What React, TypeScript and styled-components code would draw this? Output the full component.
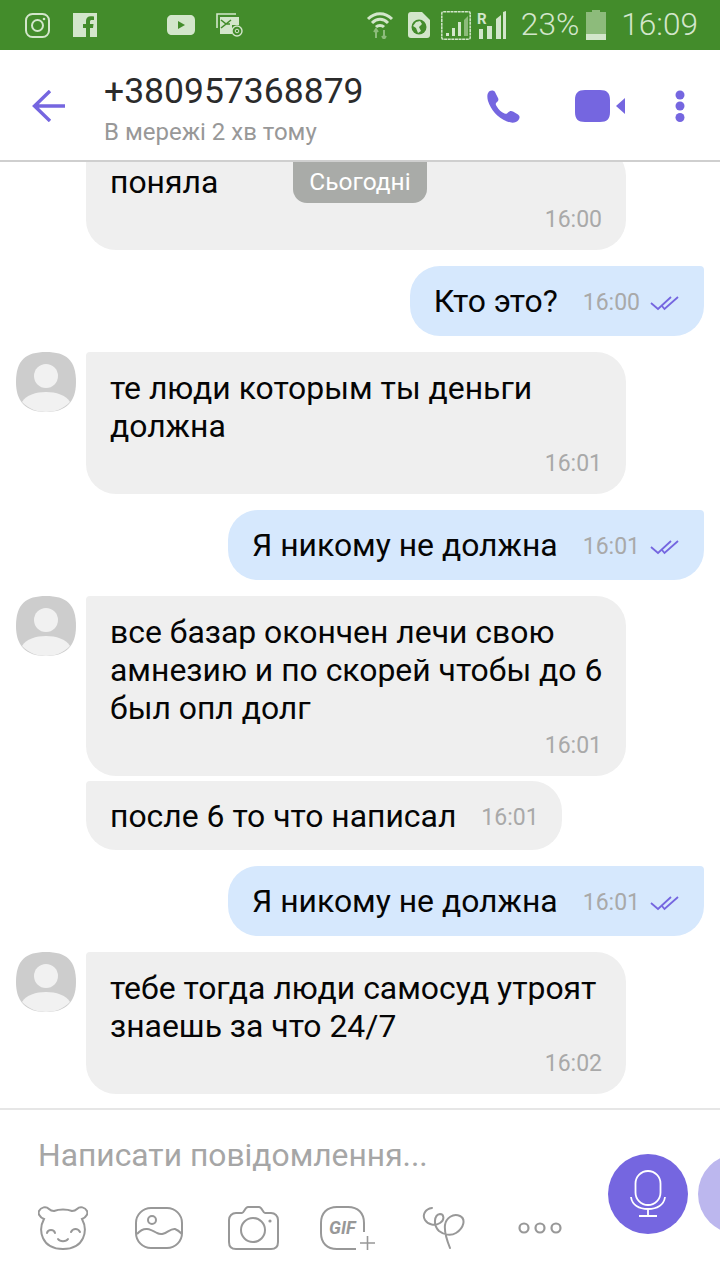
import React from 'react'
import styled, { createGlobalStyle } from 'styled-components'

const colors = {
  statusBar: '#438c2b',
  statusIcon: '#d3e6cb',
  violet: '#7566e0',
  incoming: '#efefef',
  outgoing: '#d6e8fd',
  time: '#a9a9a9',
  grey: '#989898',
}

const GlobalStyle = createGlobalStyle`
  html, body {
    margin: 0;
    padding: 0;
    background: #fff;
  }
  * {
    box-sizing: border-box;
  }
`

const Screen = styled.div`
  width: 720px;
  height: 1280px;
  display: flex;
  flex-direction: column;
  overflow: hidden;
  font-family: Roboto, 'Noto Sans', sans-serif;
  background: #fff;
`

const StatusBar = styled.div`
  height: 50px;
  flex-shrink: 0;
  display: flex;
  align-items: center;
  padding: 0 22px 0 25px;
  background: ${colors.statusBar};
  color: ${colors.statusIcon};
`

const StatusIcon = styled.svg<{ $gap?: number }>`
  display: block;
  flex-shrink: 0;
  margin-left: ${(p) => p.$gap || 0}px;
`

const StatusSpacer = styled.div`
  flex: 1;
`

const StatusText = styled.span<{ $gap: number }>`
  margin-left: ${(p) => p.$gap}px;
  font-size: 31.6px;
  font-weight: 300;
  line-height: 50px;
  white-space: nowrap;
`

const Header = styled.header`
  height: 112px;
  flex-shrink: 0;
  display: flex;
  align-items: center;
  padding: 2px 35px 0 32px;
  border-bottom: 2px solid #cfcfcf;
`

const Peer = styled.div`
  margin-left: 38px;
  flex: 1;
  padding-top: 10px;
`

const PeerName = styled.div`
  font-size: 35.5px;
  line-height: 42px;
  color: #2b2b2b;
`

const PeerState = styled.div`
  font-size: 24px;
  line-height: 40px;
  color: ${colors.grey};
`

const HeaderIcon = styled.svg<{ $gap: number }>`
  display: block;
  flex-shrink: 0;
  margin-left: ${(p) => p.$gap}px;
`

const Chat = styled.main`
  position: relative;
  flex: 1;
  min-height: 0;
  display: flex;
  flex-direction: column;
  justify-content: flex-end;
  padding: 0 16px 14px;
  overflow: hidden;
`

const DayBadge = styled.div`
  position: absolute;
  top: 0;
  left: 293px;
  width: 134px;
  height: 41px;
  padding-top: 2px;
  border-radius: 0 0 14px 14px;
  background: #a9aba8;
  color: #fff;
  font-size: 24.5px;
  line-height: 36px;
  text-align: center;
`

const Row = styled.div<{ $out?: boolean; $tight?: boolean }>`
  flex-shrink: 0;
  display: flex;
  justify-content: ${(p) => (p.$out ? 'flex-end' : 'flex-start')};
  margin-top: ${(p) => (p.$tight ? 5 : 16)}px;
`

const Avatar = styled.svg`
  display: block;
  flex-shrink: 0;
  width: 60px;
  height: 60px;
`

const AvatarGap = styled.div`
  width: 60px;
  flex-shrink: 0;
`

const Bubble = styled.div<{ $out?: boolean; $wide?: boolean }>`
  margin-left: ${(p) => (p.$out ? 0 : 10)}px;
  width: ${(p) => (p.$wide ? '540px' : 'auto')};
  background: ${(p) => (p.$out ? colors.outgoing : colors.incoming)};
  border-radius: ${(p) => (p.$out ? '30px 4px 30px 30px' : '4px 30px 30px 30px')};
  color: #050505;
  font-size: 31.9px;
`

const Block = styled.div`
  padding: 17px 24px 14px;
  line-height: 38px;
  white-space: nowrap;
`

const Inline = styled.div<{ $compact?: boolean }>`
  height: ${(p) => (p.$compact ? 69 : 70)}px;
  display: flex;
  align-items: center;
  padding: 0 ${(p) => (p.$compact ? 23 : 24)}px 0 24px;
  line-height: 38px;
  white-space: nowrap;
`

const BlockTime = styled.div`
  margin-top: 3px;
  font-size: 23px;
  line-height: 32px;
  color: ${colors.time};
  text-align: right;
`

const InlineTime = styled.div`
  margin: 4px 0 0 25px;
  font-size: 23px;
  line-height: 32px;
  color: ${colors.time};
`

const Check = styled.svg`
  display: block;
  margin: 4px 0 0 10px;
  width: 30px;
  height: 16px;
`

const Composer = styled.footer`
  height: 172px;
  flex-shrink: 0;
  display: flex;
  border-top: 2px solid #e6e6e6;
  padding-left: 38px;
`

const ComposerMain = styled.div`
  flex: 0 0 570px;
  min-width: 0;
`

const Placeholder = styled.div`
  margin-top: 25px;
  font-size: 31.8px;
  line-height: 40px;
  color: #a6a6a6;
  white-space: nowrap;
`

const Tools = styled.div`
  margin-top: 31px;
  display: flex;
  align-items: center;
  color: ${colors.grey};
`

const Tool = styled.svg<{ $gap?: number }>`
  display: block;
  flex-shrink: 0;
  margin-left: ${(p) => p.$gap || 0}px;
`

const Round = styled.div<{ $faded?: boolean }>`
  flex-shrink: 0;
  width: 80px;
  height: 80px;
  margin-top: 44px;
  margin-left: ${(p) => (p.$faded ? 10 : 0)}px;
  display: flex;
  align-items: center;
  justify-content: center;
  border-radius: 50%;
  background: ${(p) => (p.$faded ? '#bcb7ee' : colors.violet)};
`

const AvatarIcon = () => (
  <Avatar viewBox="0 0 60 60">
    <path
      d="M30 0C50 0 60 8 60 30C60 50 50 60 30 60C10 60 0 50 0 30C0 8 10 0 30 0Z"
      fill="#cdcdcd"
    />
    <circle cx="30" cy="24" r="12" fill="#f1f1f1" />
    <path d="M6 50C10 43 20 40 30 40C40 40 50 43 54 50C47 57 39 60 30 60C21 60 13 57 6 50Z" fill="#f1f1f1" />
  </Avatar>
)

const DoubleCheck = () => (
  <Check viewBox="0 0 30 16" fill="none" stroke={colors.violet} strokeWidth="1.8">
    <path d="M1 8L8 14L21 2" />
    <path d="M12 11L14.5 14L28 2" />
  </Check>
)

const BearIcon = () => (
  <Tool width="50" height="44" viewBox="0 0 50 44" fill="none" stroke="currentColor" strokeWidth="2">
    <path d="M6 13C1 11 0 7 1 5C3 1 8 0 11 3C13 5 14 5 16 5C21 3 29 3 34 5C36 5 37 5 39 3C42 0 47 1 49 5C50 7 49 11 44 13C50 24 47 43 25 43C3 43 0 24 6 13Z" />
    <path d="M9 27C10 23 16 23 17 27M33 26C35 22 40 22 42 26M20 33C22 36 28 36 30 33" strokeLinecap="round" />
  </Tool>
)

const GalleryIcon = () => (
  <Tool $gap={47} width="48" height="42" viewBox="0 0 48 42" fill="none" stroke="currentColor" strokeWidth="2">
    <rect x="1" y="1" width="46" height="40" rx="15" />
    <circle cx="17" cy="13" r="4" />
    <path d="M2 27C9 19 15 22 22 26C30 30 34 21 40 22C43 23 45 25 47 27" />
  </Tool>
)

const CameraIcon = () => (
  <Tool $gap={45} width="51" height="44" viewBox="0 0 51 44" fill="none" stroke="currentColor" strokeWidth="2">
    <path d="M8 7H14C16 7 17 1 20 1H31C34 1 35 7 37 7H43C47 7 50 10 50 14V36C50 41 47 43 43 43H8C4 43 1 41 1 36V14C1 10 4 7 8 7Z" />
    <circle cx="25" cy="24" r="12" />
    <circle cx="42" cy="15" r="1.6" fill="currentColor" stroke="none" />
  </Tool>
)

const GifIcon = () => (
  <Tool $gap={41} width="56" height="44" viewBox="0 0 56 44" fill="none" stroke="currentColor" strokeWidth="2">
    <path d="M36 43H17C7 43 1 37 1 27V17C1 7 7 1 17 1H28C38 1 44 7 44 17V26" />
    <path d="M40 37H55M47.5 30V44" strokeWidth="1.6" />
    <text x="9" y="28" fontFamily="Roboto, sans-serif" fontSize="18" fontWeight="700" fontStyle="italic" fill="currentColor" stroke="none">
      GIF
    </text>
  </Tool>
)

const DoodleIcon = () => (
  <Tool $gap={46} width="44" height="42" viewBox="0 0 44 42" fill="none" stroke="currentColor" strokeWidth="2">
    <path d="M10 1C3 2 0 8 3 13C6 18 13 19 18 16C23 13 22 7 18 7C12 8 11 18 17 24C22 28 29 29 34 26C42 21 44 12 38 9C31 6 24 11 23 18C22 26 26 36 28 41" strokeLinecap="round" />
  </Tool>
)

const MoreIcon = () => (
  <Tool $gap={52} width="44" height="12" viewBox="0 0 44 12" fill="none" stroke="currentColor" strokeWidth="2.2">
    <circle cx="6" cy="6" r="4.5" />
    <circle cx="22" cy="6" r="4.5" />
    <circle cx="38" cy="6" r="4.5" />
  </Tool>
)

export default function App() {
  return (
    <Screen>
      <GlobalStyle />
      <StatusBar>
        <StatusIcon width="25" height="25" viewBox="0 0 25 25" fill="none" stroke="currentColor" strokeWidth="2">
          <rect x="1" y="1" width="23" height="23" rx="6.5" />
          <circle cx="12.5" cy="12.5" r="5.5" />
          <circle cx="19" cy="6" r="1.3" fill="currentColor" stroke="none" />
        </StatusIcon>
        <StatusIcon $gap={23} width="24" height="24" viewBox="0 0 24 24">
          <path
            fill="currentColor"
            fillRule="evenodd"
            d="M0 0H24V24H17V15H20L20.5 11H17V9C17 7.5 17.5 7 19 7H21V3.5C20 3.3 18.8 3.2 17.8 3.2C14.8 3.2 13 5 13 8V11H10V15H13V24H0Z"
          />
        </StatusIcon>
        <StatusIcon $gap={70} width="28" height="20" viewBox="0 0 28 20">
          <path
            fill="currentColor"
            fillRule="evenodd"
            d="M5 0H23C26 0 28 2 28 5V15C28 18 26 20 23 20H5C2 20 0 18 0 15V5C0 2 2 0 5 0ZM11 6V14L18 10Z"
          />
        </StatusIcon>
        <StatusIcon $gap={21} width="27" height="24" viewBox="0 0 27 24" fill="none" stroke="currentColor">
          <path d="M1 15V1H20" strokeWidth="1.6" />
          <path d="M4 4H23V12H16V21H4Z" fill="currentColor" stroke="none" />
          <path d="M5 7L10 11L5 15M15 7L10 11M10 11H14" stroke={colors.statusBar} strokeWidth="1.6" />
          <circle cx="21" cy="18" r="5" strokeWidth="1.4" />
          <circle cx="21" cy="18" r="1.8" strokeWidth="1" />
        </StatusIcon>
        <StatusSpacer />
        <StatusIcon width="28" height="28" viewBox="0 0 28 28" fill="none" stroke="currentColor" strokeWidth="3">
          <path d="M2 8C9 1 19 1 26 8M6 12C11 7 17 7 22 12M10 16C12 14 16 14 18 16" />
          <path d="M10 19V27M8 21L10 18L12 21M18 27V19M16 25L18 28L20 25" stroke="#8dbb7b" strokeWidth="2" />
        </StatusIcon>
        <StatusIcon $gap={14} width="22" height="26" viewBox="0 0 22 26">
          <path fill="currentColor" d="M3 0H14L22 8V23C22 25 21 26 19 26H3C1 26 0 25 0 23V3C0 1 1 0 3 0Z" />
          <circle cx="11" cy="15" r="7.5" fill={colors.statusBar} />
          <path fill="currentColor" d="M8 10L12 9L14 12L11 15L13 19L10 21L8 16L5 14Z" />
        </StatusIcon>
        <StatusIcon $gap={11} width="30" height="29" viewBox="0 0 30 29" fill="none">
          <rect x="0.8" y="0.8" width="28.4" height="27.4" rx="1.5" stroke="currentColor" strokeWidth="1.5" strokeDasharray="3 0.6" />
          <path d="M5 25H8V22H5ZM11 25H14V17H11ZM17 25H20V11H17Z" fill="currentColor" />
          <path d="M23 25H27V5L23 9Z" fill="#8dbb7b" />
        </StatusIcon>
        <StatusIcon $gap={6} width="30" height="28" viewBox="0 0 30 28">
          <path fill="currentColor" d="M2 18H6V28H2ZM10 15H15V28H10ZM19 8L24 4V28H19ZM26 1L29 0V28H26Z" />
          <text x="0" y="13" fontFamily="Roboto, sans-serif" fontSize="15" fontWeight="700" fill="currentColor">
            R
          </text>
        </StatusIcon>
        <StatusText $gap={14}>23%</StatusText>
        <StatusIcon $gap={7} width="20" height="30" viewBox="0 0 20 30">
          <path fill="#8dbb7b" d="M6 0H14V2H20V24H0V2H6Z" />
          <rect y="24" width="20" height="6" fill="currentColor" />
        </StatusIcon>
        <StatusText $gap={15}>16:09</StatusText>
      </StatusBar>

      <Header>
        <svg width="34" height="32" viewBox="0 0 34 32" fill="none" stroke={colors.violet} strokeWidth="3.4">
          <path d="M18 1L2.500 16L18 31M3 16H33" />
        </svg>
        <Peer>
          <PeerName>+380957368879</PeerName>
          <PeerState>В мережі 2 хв тому</PeerState>
        </Peer>
        <HeaderIcon $gap={0} width="33" height="33" viewBox="0 0 33 33">
          <path
            fill={colors.violet}
            d="M2 1.5C4 0 7 0 8 2L11 8C12 10 11 11.5 9.5 12.5C8.5 13.5 8.5 14.5 9.5 16C12 20 14 22 17.5 23.5C19 24 20 24 21 22.5C22.5 21 24 20.5 26 21.5L31 24.5C33 26 33 28 31.5 30C29 33 25 33.5 20 31.5C10 27 4 20 1 11C0 7 0 4 2 1.5Z"
          />
        </HeaderIcon>
        <HeaderIcon $gap={55} width="50" height="32" viewBox="0 0 50 32">
          <path
            fill={colors.violet}
            d="M10 0H25C32 0 35 3 35 10V22C35 29 32 32 25 32H10C3 32 0 29 0 22V10C0 3 3 0 10 0ZM50 8V24L41 16Z"
          />
        </HeaderIcon>
        <HeaderIcon $gap={50} width="10" height="32" viewBox="0 0 10 32">
          <circle cx="5" cy="5" r="4.5" fill={colors.violet} />
          <circle cx="5" cy="16" r="4.5" fill={colors.violet} />
          <circle cx="5" cy="27.5" r="4.5" fill={colors.violet} />
        </HeaderIcon>
      </Header>

      <Chat>
        <DayBadge>Сьогодні</DayBadge>

        <Row>
          <AvatarGap />
          <Bubble $wide>
            <Block>
              поняла
              <BlockTime>16:00</BlockTime>
            </Block>
          </Bubble>
        </Row>

        <Row $out>
          <Bubble $out>
            <Inline>
              Кто это?
              <InlineTime>16:00</InlineTime>
              <DoubleCheck />
            </Inline>
          </Bubble>
        </Row>

        <Row>
          <AvatarIcon />
          <Bubble $wide>
            <Block>
              те люди которым ты деньги
              <br />
              должна
              <BlockTime>16:01</BlockTime>
            </Block>
          </Bubble>
        </Row>

        <Row $out>
          <Bubble $out>
            <Inline>
              Я никому не должна
              <InlineTime>16:01</InlineTime>
              <DoubleCheck />
            </Inline>
          </Bubble>
        </Row>

        <Row>
          <AvatarIcon />
          <Bubble $wide>
            <Block>
              все базар окончен лечи свою
              <br />
              амнезию и по скорей чтобы до 6
              <br />
              был опл долг
              <BlockTime>16:01</BlockTime>
            </Block>
          </Bubble>
        </Row>

        <Row $tight>
          <AvatarGap />
          <Bubble>
            <Inline $compact>
              после 6 то что написал
              <InlineTime>16:01</InlineTime>
            </Inline>
          </Bubble>
        </Row>

        <Row $out>
          <Bubble $out>
            <Inline>
              Я никому не должна
              <InlineTime>16:01</InlineTime>
              <DoubleCheck />
            </Inline>
          </Bubble>
        </Row>

        <Row>
          <AvatarIcon />
          <Bubble $wide>
            <Block>
              тебе тогда люди самосуд утроят
              <br />
              знаешь за что 24/7
              <BlockTime>16:02</BlockTime>
            </Block>
          </Bubble>
        </Row>
      </Chat>

      <Composer>
        <ComposerMain>
          <Placeholder>Написати повідомлення...</Placeholder>
          <Tools>
            <BearIcon />
            <GalleryIcon />
            <CameraIcon />
            <GifIcon />
            <DoodleIcon />
            <MoreIcon />
          </Tools>
        </ComposerMain>
        <Round>
          <svg width="36" height="48" viewBox="0 0 36 48" fill="none" stroke="#fff" strokeWidth="1.8">
            <rect x="5.5" y="1" width="25" height="34" rx="12.5" />
            <path d="M1 27C2 35 9 39 18 39C27 39 34 35 35 27M18 39V46M9 46H27" />
          </svg>
        </Round>
        <Round $faded />
      </Composer>
    </Screen>
  )
}
